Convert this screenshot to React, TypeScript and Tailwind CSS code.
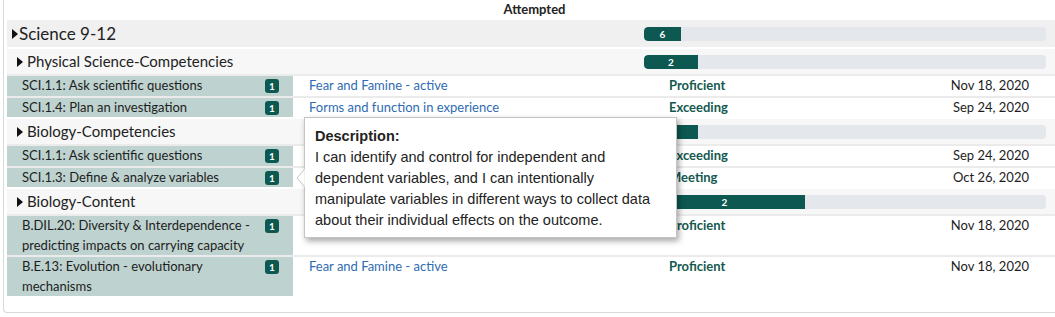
import React from 'react';

interface Standard {
  code: string;
  lines: string[];
  activity: string;
  level: string;
  date: string;
}

interface Group {
  title: string;
  count: number;
  fill: number;
  standards: Standard[];
}

const groups: Group[] = [
  {
    title: 'Physical Science-Competencies',
    count: 2,
    fill: 54,
    standards: [
      { code: 'a', lines: ['SCI.1.1: Ask scientific questions'], activity: 'Fear and Famine - active', level: 'Proficient', date: 'Nov 18, 2020' },
      { code: 'b', lines: ['SCI.1.4: Plan an investigation'], activity: 'Forms and function in experience', level: 'Exceeding', date: 'Sep 24, 2020' },
    ],
  },
  {
    title: 'Biology-Competencies',
    count: 2,
    fill: 54,
    standards: [
      { code: 'c', lines: ['SCI.1.1: Ask scientific questions'], activity: '', level: 'Exceeding', date: 'Sep 24, 2020' },
      { code: 'd', lines: ['SCI.1.3: Define & analyze variables'], activity: '', level: 'Meeting', date: 'Oct 26, 2020' },
    ],
  },
  {
    title: 'Biology-Content',
    count: 2,
    fill: 161,
    standards: [
      { code: 'e', lines: ['B.DIL.20: Diversity & Interdependence -', 'predicting impacts on carrying capacity'], activity: '', level: 'Proficient', date: 'Nov 18, 2020' },
      { code: 'f', lines: ['B.E.13: Evolution - evolutionary', 'mechanisms'], activity: 'Fear and Famine - active', level: 'Proficient', date: 'Nov 18, 2020' },
    ],
  },
];

const Caret = () => (
  <svg width="6" height="10" viewBox="0 0 6 10" className="shrink-0">
    <polygon points="0,0 6,5 0,10" fill="#111" />
  </svg>
);

const Bar = ({ fill, label }: { fill: number; label: number }) => (
  <div className="h-[14px] w-[402px] rounded-[4px] bg-[#e4e7eb] overflow-hidden flex">
    <div
      className="h-full bg-[#0d5850] rounded-l-[4px] flex items-center justify-center text-white text-[10px] font-bold leading-none"
      style={{ width: fill }}
    >
      {label}
    </div>
  </div>
);

const StandardRow = ({ s }: { s: Standard }) => (
  <div className="grid grid-cols-[286px_360px_1fr_200px] border-t-[2px] border-[#ebebeb] text-[13px] leading-[19.5px]">
    <div className="bg-[#bed2cf] pl-[15px] pr-[14px] flex justify-between items-start text-[#1d1d1d]">
      <div className="whitespace-nowrap">
        {s.lines.map((l) => (
          <div key={l}>{l}</div>
        ))}
      </div>
      <span className="mt-[3px] shrink-0 w-[14px] h-[14px] rounded-[3px] bg-[#0d5850] text-white text-[10px] font-bold flex items-center justify-center leading-none">
        1
      </span>
    </div>
    <div className="pl-[16px] text-[#2f6cb3]">{s.activity}</div>
    <div className="pl-[16px] font-bold text-[#14594f]">{s.level}</div>
    <div className="pr-[33px] text-right text-[#1d1d1d]">{s.date}</div>
  </div>
);

export default function App() {
  return (
    <div
      className="relative w-[1055px] h-[317px] overflow-hidden bg-white"
      style={{ fontFamily: 'Lato, "Noto Sans", sans-serif' }}
    >
      <div className="ml-[3px] w-[1060px] border-l border-r border-b border-[#d9d9d9] rounded-b-[4px] pl-[3px] pb-[16px]">
        <div className="h-[20px] flex items-center justify-center text-[13px] font-bold text-[#222]">Attempted</div>

        <div className="h-[27px] bg-[#f0f0f0] grid grid-cols-[637px_1fr] items-center">
          <div className="flex items-center pl-[5px] gap-[1px] text-[17px] text-[#222]">
            <Caret />
            <span>Science 9-12</span>
          </div>
          <Bar fill={37} label={6} />
        </div>

        {groups.map((g) => (
          <div key={g.title}>
            <div className="h-[25px] mt-[2px] bg-[#f7f7f7] grid grid-cols-[637px_1fr] items-center">
              <div className="flex items-center pl-[10px] gap-[4px] text-[15px] text-[#222]">
                <Caret />
                <span>{g.title}</span>
              </div>
              <Bar fill={g.fill} label={g.count} />
            </div>
            {g.standards.map((s) => (
              <StandardRow key={s.code} s={s} />
            ))}
          </div>
        ))}
      </div>

      <div
        className="absolute left-[304px] top-[117px] w-[373px] h-[121px] bg-white border border-[#c4c4c4] shadow-[2px_3px_6px_rgba(0,0,0,0.35)] pl-[10px] pr-[20px] pt-[8px] text-[14.5px] leading-[21px] text-[#222]"
        style={{ fontFamily: '"Liberation Sans", Arial, sans-serif' }}
      >
        <div className="font-bold">Description:</div>
        <div>
          I can identify and control for independent and dependent variables, and I can intentionally manipulate
          variables in different ways to collect data about their individual effects on the outcome.
        </div>
        <svg width="9" height="18" viewBox="0 0 9 18" className="absolute left-[-9px] top-[51px]">
          <polygon points="9,0 1,9 9,18" fill="white" stroke="#c4c4c4" strokeWidth="1" />
          <rect x="8.5" y="0" width="2" height="18" fill="white" />
        </svg>
      </div>
    </div>
  );
}
